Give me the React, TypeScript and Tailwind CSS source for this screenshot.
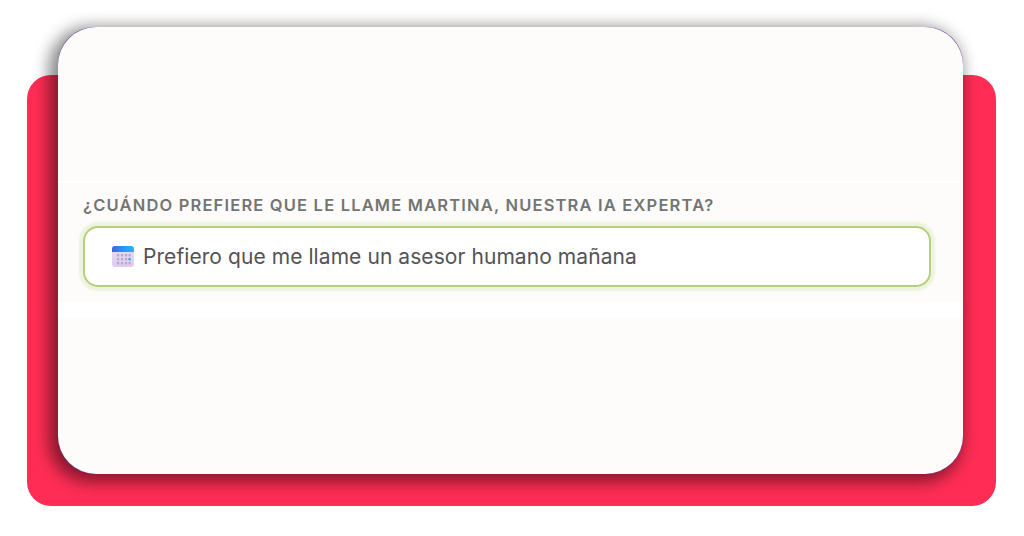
const dayRows = [9, 13, 17];
const dayColumns = [6, 10, 14, 17.5];

function CalendarIcon() {
  return (
    <svg viewBox="0 0 24 22" className="w-6 h-[22px] shrink-0" aria-hidden="true">
      <defs>
        <linearGradient id="header" x1="0" x2="1">
          <stop offset="0" stopColor="#3b67dd" />
          <stop offset="0.65" stopColor="#27a0fa" />
          <stop offset="1" stopColor="#35adfb" />
        </linearGradient>
        <linearGradient id="page" x1="0" y1="0" x2="0" y2="1">
          <stop offset="0" stopColor="#e5def1" />
          <stop offset="1" stopColor="#dfcbf0" />
        </linearGradient>
      </defs>
      <rect x="1" y="0" width="22" height="21" rx="3" fill="url(#page)" />
      <path d="M1 6V3Q1 0 4 0H20Q23 0 23 3V6Z" fill="url(#header)" />
      {dayRows.map((y) =>
        dayColumns.map((x) => (
          <rect
            key={`${x}-${y}`}
            x={x}
            y={y - 1}
            width="2.2"
            height="2.4"
            fill={x === 17.5 && y === 13 ? '#36a2f5' : '#b3a9c8'}
          />
        ))
      )}
    </svg>
  );
}

interface CallFieldProps {
  label: string;
  value: string;
}

function CallField({ label, value }: CallFieldProps) {
  return (
    <div className="h-[119px] bg-[#fdfcfa] pl-[25px] pr-8 pt-3">
      <p className="h-[31px] whitespace-nowrap text-[16.5px] leading-[21px] font-semibold tracking-[1.18px] text-[#747474]">
        {label}
      </p>
      <button
        type="button"
        className="flex h-[61px] w-full items-center rounded-[15px] border-2 border-[#b5d07c] bg-white pl-[26px] text-left shadow-[0_0_2px_4px_#edf3df]"
      >
        <CalendarIcon />
        <span className="ml-2 whitespace-nowrap text-[21px] tracking-[0.07px] text-[#545356]">{value}</span>
      </button>
    </div>
  );
}

export default function App() {
  return (
    <main className="relative h-[536px] w-[1024px] overflow-hidden bg-white pl-[58px] pt-[27px] font-['Inter',sans-serif]">
      <div className="absolute left-[27px] top-[75px] h-[431px] w-[969px] rounded-[24px] bg-[#ff2d55]" />
      <div className="relative h-[447px] w-[905px] rounded-[37px] bg-[#6d35a0] shadow-[-5px_4px_16px_4px_rgba(0,0,0,0.48)]">
        <section className="h-full overflow-hidden rounded-[38px] bg-[#fdfcfa]">
          <div className="h-[154px]" />
          <div className="h-0.5 bg-white" />
          <CallField
            label="¿CUÁNDO PREFIERE QUE LE LLAME MARTINA, NUESTRA IA EXPERTA?"
            value="Prefiero que me llame un asesor humano mañana"
          />
          <div className="h-4 bg-white" />
        </section>
      </div>
    </main>
  );
}
